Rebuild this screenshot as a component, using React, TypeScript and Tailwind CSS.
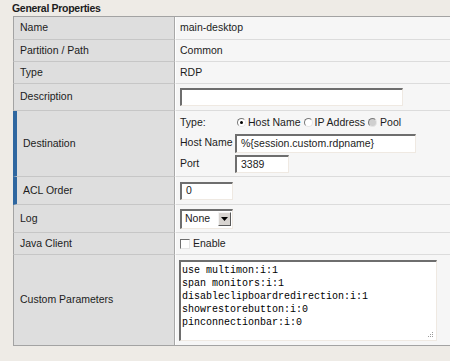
import React from "react";

// Classic inset field borders (dark top/left, light bottom/right)
const INSET =
  "border-t-2 border-l-2 border-r border-b border-t-[#6e6e6e] border-l-[#6e6e6e] border-r-[#efe9e2] border-b-[#efe9e2] bg-white";

type Row = {
  label: string;
  h: string;
  marked?: boolean;
  content: React.ReactNode;
};

function Radio({ checked, disabled }: { checked?: boolean; disabled?: boolean }) {
  return (
    <span
      className={
        "relative inline-block h-[9px] w-[9px] rounded-full border border-t-[#7a7a7a] border-l-[#7a7a7a] border-r-[#e6e6e6] border-b-[#e6e6e6] " +
        (disabled ? "bg-[#cfcfcf]" : "bg-white")
      }
    >
      {checked && (
        <span className="absolute left-[2px] top-[2px] h-[3px] w-[3px] rounded-full bg-black" />
      )}
    </span>
  );
}

const rows: Row[] = [
  { label: "Name", h: "h-[23px]", content: <span>main-desktop</span> },
  { label: "Partition / Path", h: "h-[22px]", content: <span>Common</span> },
  { label: "Type", h: "h-[22px]", content: <span>RDP</span> },
  {
    label: "Description",
    h: "h-[27px]",
    content: <div className={INSET + " h-[18px] w-[223px]"} />,
  },
  {
    label: "Destination",
    h: "h-[66px]",
    marked: true,
    content: (
      <div className="flex flex-col">
        <div className="flex h-[20px] items-center">
          <span className="w-[57px]">Type:</span>
          <Radio checked />
          <span className="ml-[2px] mr-[3px]">Host Name</span>
          <Radio />
          <span className="ml-[2px] mr-[3px]">IP Address</span>
          <Radio disabled />
          <span className="ml-[3px]">Pool</span>
        </div>
        <div className="flex h-[21px] items-center">
          <span className="w-[55px]">Host Name</span>
          <div className={INSET + " flex h-[19px] w-[181px] items-center pl-[4px]"}>
            %&#123;session.custom.rdpname&#125;
          </div>
        </div>
        <div className="flex h-[21px] items-center">
          <span className="w-[55px]">Port</span>
          <div className={INSET + " flex h-[18px] w-[54px] items-center pl-[4px]"}>
            3389
          </div>
        </div>
      </div>
    ),
  },
  {
    label: "ACL Order",
    h: "h-[28px]",
    marked: true,
    content: (
      <div className={INSET + " flex h-[18px] w-[53px] items-center pl-[4px]"}>0</div>
    ),
  },
  {
    label: "Log",
    h: "h-[28px]",
    content: (
      <div className={INSET + " flex h-[20px] w-[53px] items-center pl-[3px]"}>
        <span className="flex-1">None</span>
        <span className="mr-[1px] flex h-[14px] w-[13px] items-center justify-center border border-t-[#f4f4f4] border-l-[#f4f4f4] border-r-[#5a5a5a] border-b-[#5a5a5a] bg-[#d8d4d0]">
          <svg width="7" height="4" viewBox="0 0 7 4">
            <path d="M0 0h7L3.5 4z" fill="#000" />
          </svg>
        </span>
      </div>
    ),
  },
  {
    label: "Java Client",
    h: "h-[22px]",
    content: (
      <div className="flex items-center">
        <span className="h-[10px] w-[10px] border border-t-[#6e6e6e] border-l-[#6e6e6e] border-r-[#e6e6e6] border-b-[#e6e6e6] bg-white" />
        <span className="ml-[3px]">Enable</span>
      </div>
    ),
  },
  {
    label: "Custom Parameters",
    h: "h-[90px]",
    content: (
      <div
        className={
          INSET +
          " relative -ml-[1px] h-[81px] w-[258px] whitespace-pre pl-[1px] pt-[2px] font-['Liberation_Mono','Courier_New',monospace] text-[10px] leading-[13px] text-black"
        }
      >
        {"use multimon:i:1\nspan monitors:i:1\ndisableclipboardredirection:i:1\nshowrestorebutton:i:0\npinconnectionbar:i:0"}
        <svg className="absolute bottom-[2px] right-[2px]" width="7" height="7" viewBox="0 0 7 7">
          <rect x="5" y="1" width="1" height="1" fill="#9a9a9a" />
          <rect x="3" y="3" width="1" height="1" fill="#9a9a9a" />
          <rect x="5" y="3" width="1" height="1" fill="#9a9a9a" />
          <rect x="1" y="5" width="1" height="1" fill="#9a9a9a" />
          <rect x="3" y="5" width="1" height="1" fill="#9a9a9a" />
          <rect x="5" y="5" width="1" height="1" fill="#9a9a9a" />
        </svg>
      </div>
    ),
  },
];

export default function App() {
  return (
    <div className="h-[361px] w-[450px] overflow-hidden bg-[#eeebe6] font-['Liberation_Sans',Arial,sans-serif] text-[10.5px] text-[#1c1c1c]">
      <div className="h-[16px] pl-[12px] pt-[2px] text-[10.5px] font-bold leading-[12px] tracking-[-0.3px]">
        General Properties
      </div>

      <div className="ml-[13px] w-[450px] border-t border-b border-[#a3a3a3]">
        {rows.map((row, i) => (
          <div key={i} className={"flex " + row.h}>
            <div
              className={
                "flex w-[162px] shrink-0 items-center border-r border-r-[#a8a8a8] bg-[#dedede] " +
                (row.marked
                  ? "border-l-4 border-l-[#2f67a0] pl-[6px] "
                  : "border-l border-l-[#a3a3a3] pl-[6px] ") +
                (i < rows.length - 1 ? "border-b border-b-[#c6c6c6]" : "")
              }
            >
              {row.label}
            </div>
            <div
              className={
                "flex flex-1 items-center border-l border-l-white bg-[#f6f6f6] pl-[4px] " +
                (i < rows.length - 1 ? "border-b border-b-[#dcdcdc]" : "")
              }
            >
              {row.content}
            </div>
          </div>
        ))}
      </div>
    </div>
  );
}
